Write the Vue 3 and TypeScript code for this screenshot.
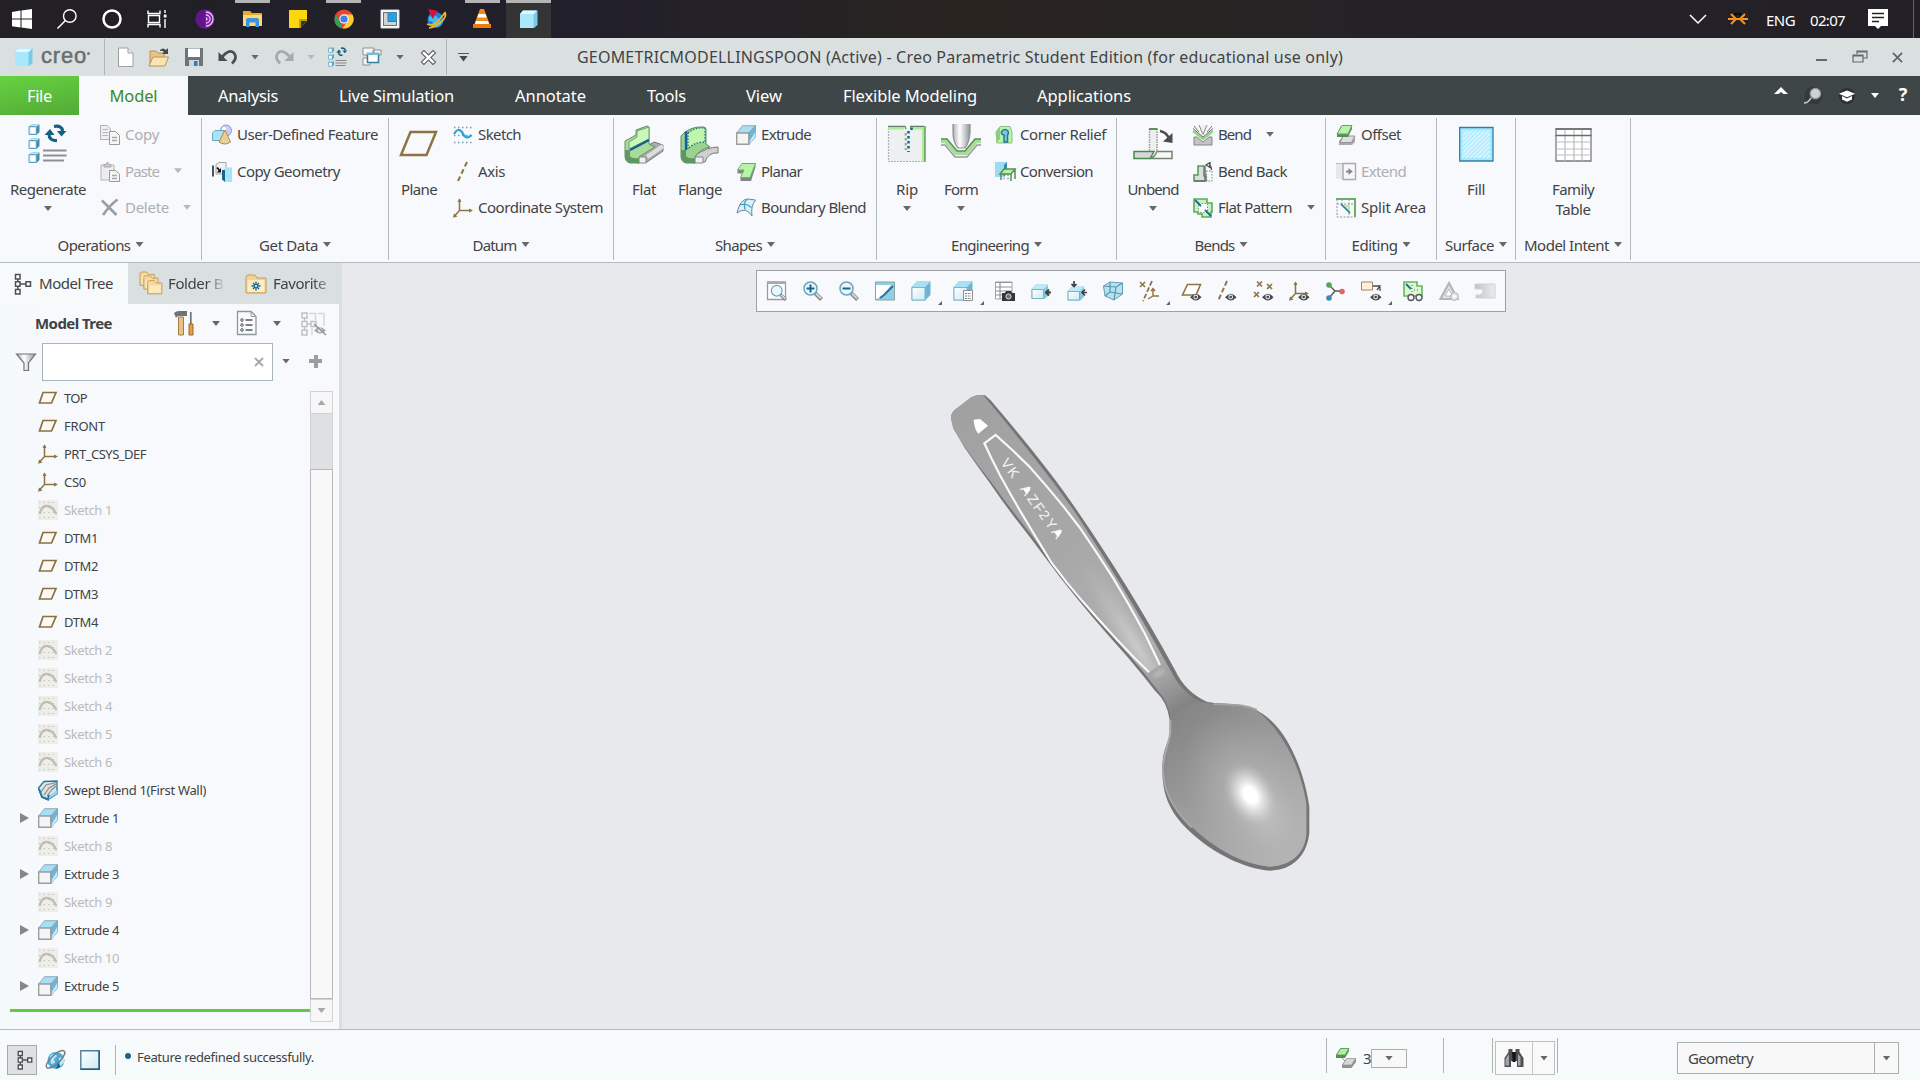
<script setup lang="ts">
interface SmallItem { icon: string; label: string; w: number; off?: boolean; caret?: number }
interface LargeItem { icon: string; lines: string[]; ws: number[]; w: number; ml: number; caret?: boolean }
interface Group { label: string; lw: number; w: number; large: LargeItem[]; gap: number; small: SmallItem[] }

// Stretches or tightens a label so it occupies the given width
const vFit = (el: HTMLElement, binding: { value?: number }) => {
  if (!binding.value) return
  el.style.letterSpacing = '0px'
  const n = (el.textContent || '').length
  const natural = el.getBoundingClientRect().width
  el.style.letterSpacing = ((binding.value - natural) / n).toFixed(3) + 'px'
}

const csys = '<path d="M6.500 1V12.500H18M6.500 12.500L1.500 18" fill="none" stroke="#8f7443" stroke-width="1.500"/><path d="M4.500 4L6.500 .5 8.500 4ZM16 10.500L20 12.500 16 14.500ZM0 19.800L1 15.500 4.500 18.500Z" fill="#8f7443"/>'
const eye = '<path d="M9 16.300Q15 9 20.500 16.300 15 22.500 9 16.300Z" fill="#45484a"/><circle cx="14.700" cy="16" r="2.400" fill="#e5e7e8"/><circle cx="14.700" cy="16" r="1.300" fill="#45484a"/>'
const cube = '<path d="M.5 6L6 .5H19.500V14L14 19.500H.5Z" fill="#6ab6d6"/><path d="M.5 6L6 .5H19.500L14 6Z" fill="#a8e1f6"/><path d="M1 6.500H14V19H1Z" fill="url(#wg)" stroke="#84b4c8"/>'
const extrude = '<path d="M.7 8L6.500 .7H19.500L13 8Z" fill="#a9dff4" stroke="#7f9ba6" stroke-width=".8"/><path d="M13 8L19.500 .7V12L13 19.500Z" fill="#71b5d2" stroke="#7f9ba6" stroke-width=".8"/><path d="M13.500 19L19.300 12V7L13.500 16Z" fill="#bfeafa"/><path d="M.7 8H12.800V19.300H.7Z" fill="#f4f4f5" stroke="#9b9d9e" stroke-width="1.400"/>'
const miniCube = (y: number) => `<g transform="translate(.5 ${y})"><path d="M.5 2.500L3 .5H11V8L8.500 10.500H.5Z" fill="#3f8fb5"/><path d="M.5 2.500L3 .5H11L8.500 2.500Z" fill="#b7e9fb"/><path d="M.5 2.500H8V10.500H.5Z" fill="#c4ebfa" stroke="#5fa3c0"/><path d="M2 4H6.500V9H2Z" fill="#fff"/></g>`
const spin = '<path d="M26 2.500Q34 1 34.500 7" fill="none" stroke="#14607f" stroke-width="3.200"/><path d="M29 7H38.500L33.500 12.500Z" fill="#14607f"/><path d="M29 16.500Q21 17 21 10" fill="none" stroke="#14607f" stroke-width="3.200"/><path d="M16.500 11L22 5 26.500 11Z" fill="#14607f"/>'
const mag = '<path d="M12 12L18.500 18.500" stroke="#858789" stroke-width="4"/><path d="M13 12.500L18 17.500" stroke="#d5d6d6" stroke-width="2"/><circle cx="7.500" cy="7.500" r="6.500" fill="#e9f8fd" stroke="#6da4bd" stroke-width="1.500"/>'
const folderShape = (x: number, y: number) => `<path d="M${x} ${y + 2}Q${x} ${y} ${x + 2} ${y}H${x + 7}L${x + 9} ${y + 2.5}H${x + 15}V${y + 14}H${x}Z" fill="#f5d99e" stroke="#c49b5e"/><path d="M${x + 2} ${y + 5}H${x + 14}V${y + 13}H${x + 2}Z" fill="#fde9bd"/>`

const icons: Record<string, string> = {
  win: '<path d="M0 3L8.500 1.600V9.500H0ZM9.500 1.400L20 0V9.500H9.500ZM0 10.500H8.500V18.500L0 17.200ZM9.500 10.500H20V20L9.500 18.600Z" fill="#fff"/>',
  search: '<circle cx="12.800" cy="7" r="6.300" fill="none" stroke="#fff" stroke-width="1.400"/><path d="M8.400 11.500L.5 19.500" stroke="#fff" stroke-width="1.500"/>',
  cortana: '<circle cx="10" cy="10" r="8.500" fill="none" stroke="#fff" stroke-width="2.500"/>',
  taskview: '<path d="M1 1.500V4.500H13V1.500M1 18.500V15.500H13V18.500M1.500 6.500H12.500V13.500H1.500ZM18 1V4M18 10V19" fill="none" stroke="#fff" stroke-width="1.400"/><path d="M16.800 5.500H19.500V8.500H16.800Z" fill="#fff"/>',
  tor: '<circle cx="9" cy="10" r="9.500" fill="#7d1fa5"/><path d="M9 .5A9.500 9.500 0 0 0 9 19.500Z" fill="#62158b"/><path d="M10 3A7 7 0 0 1 10 17M10 6A4 4 0 0 1 10 14M10 9A1 1 0 0 1 10 11" fill="none" stroke="#e8c4f3" stroke-width="1.300"/>',
  explorer: '<path d="M0 2H7L9 4H19V17H0Z" fill="#e8a92e"/><path d="M0 6H19V17H0Z" fill="#fdd876"/><path d="M3 17V11Q3 9 5 9H14Q16 9 16 11V18H12.500V13.500H6.500V18H3Z" fill="#3897de"/>',
  note: '<path d="M0 1H18V12L11 19H0Z" fill="#fed70b"/><path d="M11 19V12H18Z" fill="#34342f"/><path d="M10 10H18V12H12V19H10Z" fill="#c8a106"/>',
  chrome: '<circle cx="10" cy="10" r="9.500" fill="#e7453a"/><path d="M1.700 5.300L7 14.500 8.500 19.400A9.500 9.500 0 0 1 1.700 5.300Z" fill="#34a152"/><path d="M10 5.500H18.400A9.500 9.500 0 0 1 8.500 19.400L13.500 12Z" fill="#fccd34"/><circle cx="10" cy="10" r="4.700" fill="#f7f7f7"/><circle cx="10" cy="10" r="3.600" fill="#3d7ff0"/>',
  winapp: '<path d="M1 1H19V19H1Z" fill="#fff" stroke="#d9dde0"/><path d="M3 3H17V17H3Z" fill="#65717b"/><path d="M8.500 3.500H16.500V12H8.500Z" fill="#22a3e6"/><path d="M4 4H7.500V13H16V16H4Z" fill="#cfd3d6"/>',
  globe: '<circle cx="9.500" cy="11" r="8" fill="#1b80d8"/><path d="M3 8Q8 3 12 9T16 14Q12 20 6 17 9 12 3 12Z" fill="#37c0e9"/><path d="M1 15Q7 18 13 11T19 3Q21 8 15 13T3 19" fill="none" stroke="#efb62b" stroke-width="1.700"/><path d="M2 0L12 2 6.500 10Z" fill="#d4143c"/>',
  vlc: '<path d="M7 0H11L17 16H1Z" fill="#f08a17"/><path d="M5.500 5H12.500L13.700 8.500H4.300ZM3 12H15L16 15H2Z" fill="#fff"/><path d="M0 15H18V19H0Z" fill="#e87c10"/>',
  creo: '<path d="M1 5L4 1.500H18.500V16L15 19H1Z" fill="#79c9ea"/><path d="M1 5L4 1.500H18L15 5Z" fill="#e0f8ff"/><path d="M1 5H14.500V19H1Z" fill="#a9e7fc"/>',
  tchev: '<path d="M2 6L10 14 18 6" fill="none" stroke="#fff" stroke-width="1.500"/>',
  fly: '<path d="M0 10H6M14 10H20M3 5L8 10 3 15M17 5L12 10 17 15M8 10H12" fill="none" stroke="#f5941f" stroke-width="2"/><circle cx="8" cy="5" r="1.600" fill="#090909"/><circle cx="12" cy="5" r="1.600" fill="#090909"/>',
  notif: '<path d="M0 0H20V17H13L10 20 7 17H0Z" fill="#fff"/><path d="M4 4.500H16M4 8.500H16M4 12.500H11" stroke="#242228" stroke-width="1.300"/>',
  newf: '<path d="M2.500 1H12L17 6V19.500H2.500Z" fill="#fefefe" stroke="#9da1a3"/><path d="M12 1V6H17" fill="#e9eaea" stroke="#9da1a3"/>',
  open: '<path d="M1 4H7L9 6H15V17H1Z" fill="#e9c385" stroke="#b8935a"/><path d="M0 19L4 10H19.500L16 19Z" fill="#fbe4b3" stroke="#b8935a"/><path d="M11 3Q14 0 17 3L19 1V7H13L15 5Q13 3 11 4Z" fill="#45494b"/>',
  save: '<path d="M1 1H19V19H1Z" fill="#6f7375"/><path d="M4 1.500H16V10H4Z" fill="#fff"/><path d="M5 13H15V19H5Z" fill="#cfd4d7"/><path d="M10 14H13.500V19H10Z" fill="#3a7bb5"/>',
  undo: '<path d="M4 10Q11 1.500 16 6 20 11 14 16.500" fill="none" stroke="#494e51" stroke-width="2.800"/><path d="M.5 5V14H9.500Z" fill="#494e51"/>',
  redo: '<path d="M16 10Q9 1.500 4 6 0 11 6 16.500" fill="none" stroke="#a5aaab" stroke-width="2.800"/><path d="M19.500 5V14H10.500Z" fill="#a5aaab"/>',
  regenS: '<g transform="scale(.5)">' + miniCube(0) + miniCube(14) + miniCube(28) + spin + '<path d="M15 27H37M15 32H37M15 37H35" stroke="#85898b" stroke-width="2.400"/></g>',
  wins: '<path d="M1 1H12V8H1ZM1 11H8V18H1ZM11 3H19V8H11Z" fill="#f4f6f6" stroke="#8c9193"/><path d="M5.500 6.500H16.500V15.500H5.500Z" fill="#fff" stroke="#327f9f" stroke-width="1.500"/><path d="M5 6H17V8H5Z" fill="#72bdd7"/>',
  closex: '<path d="M4.500 4.500L15.500 15.500M15.500 4.500L4.500 15.500" stroke="#55595b" stroke-width="5.500" stroke-linecap="square"/><path d="M4.500 4.500L15.500 15.500M15.500 4.500L4.500 15.500" stroke="#fff" stroke-width="3" stroke-linecap="square"/>',
  restore: '<path d="M5 4V1H15V8H11M1 5H11V12H1Z" fill="none" stroke="#65696a" stroke-width="1.200"/><path d="M1 5H11V6.500H1ZM5 1H15V2.500H5Z" fill="#65696a"/>',
  regen: miniCube(0) + miniCube(14) + miniCube(28) + spin + '<path d="M15 26.500H38.500M15 31.500H38.500M15 36.500H36" stroke="#8d9092" stroke-width="2.200"/>',
  copy: '<path d="M.5 .5H7L10.500 4V14.500H.5Z" fill="#efefef" stroke="#b0b1b1"/><path d="M2.500 4.500H8M2.500 7.500H8M2.500 10.500H8" stroke="#b5b5b5"/><path d="M9.500 6.500H15.500L19.500 10.500V19.500H9.500Z" fill="#f6f6f6" stroke="#999b9b"/><path d="M12 12.500H17M12 15.500H17" stroke="#a9a9a9" stroke-width="1.300"/>',
  paste: '<path d="M1 3H14V18H1Z" fill="#ededed" stroke="#b5b5b5"/><path d="M4 2.500H6L7.500 0 9 2.500H11V5H4Z" fill="#cacaca" stroke="#aaa"/><path d="M9.500 8.500H15.500L19.500 12V19.500H9.500Z" fill="#f6f6f6" stroke="#999b9b"/><path d="M12 13.500H17M12 16.500H17" stroke="#a9a9a9" stroke-width="1.300"/>',
  del: '<path d="M2 2.500L16.500 17M17.500 1.500Q10 7 3 17" fill="none" stroke="#9b9d9e" stroke-width="2.600"/>',
  udf: '<circle cx="14" cy="5.500" r="5.500" fill="#c7cdf5" stroke="#8f98c9"/><circle cx="12" cy="4" r="2" fill="#fff"/><path d="M.5 8L3 5.500H12V14L10 15.500H.5Z" fill="#a9e3f8" stroke="#69a9c3"/><path d="M13 5L18.500 17Q13 21 7 17Z" fill="#e9cf94" stroke="#a88c53"/>',
  copyg: '<path d="M1 3.500V14.500" stroke="#46555b" stroke-width="2"/><path d="M4 2.500L7 .5H14V9L12 12H4Z" fill="#f1f1f1" stroke="#a2a5a6"/><path d="M9 6V10.500H4.800Z" fill="#111"/><path d="M5 5.500L8 9" stroke="#111" stroke-width="1.800"/><path d="M11 8L14 5.500H20V20H13V11H11Z" fill="#a5e5fb"/><path d="M10 8H13V20L10 17.500Z" fill="#19658a"/>',
  plane: '<path d="M11.500 8H37L27.500 31H2Z" fill="none" stroke="#8f7443" stroke-width="2.500"/>',
  sketch: '<path d="M1 2.500H19M1 10.500H19M1 17.500H19" stroke="#7d9aab" stroke-width="1.500" stroke-dasharray="1.500 2.500"/><path d="M1 9Q5 2 9 7 13 16 18.500 10" fill="none" stroke="#2aa3d9" stroke-width="2.300"/>',
  axis: '<path d="M14 0L4.500 20" stroke="#8f7443" stroke-width="2" stroke-dasharray="5 3"/>',
  csys,
  flat: '<path d="M13 28L30 18 39 21V27L23 38H12Z" fill="#a9acad" stroke="#777"/><path d="M13 33H22V39H13Z" fill="#f0f0f0" stroke="#888"/><path d="M23 33L39 22" stroke="#dedede" stroke-width="4"/><path d="M1 17L12 11V6L23 2 25 3V20L31 23 15 33V39H6Q1 38 1 32Z" fill="#a6db99" stroke="#668e62"/><path d="M5 18L13 13V7L25 3V15L5 25Z" fill="#c9f9b9" stroke="#779c70"/><path d="M1 26H6V32Q8 35 15 34V39H6Q1 37 1 32Z" fill="#5f9764"/><path d="M6 26L25 16" stroke="#175f91" stroke-width="2.300"/>',
  flange: '<path d="M14 32Q27 23 38 23V29Q28 28 25 38H12Z" fill="#cfd1d1" stroke="#777"/><path d="M13 33H23V39H13Z" fill="#f0f0f0" stroke="#888"/><path d="M1 12Q9 2 24 3L26 5V20L30 23Q20 25 15 33V39H6Q1 38 1 32Z" fill="#9bd28f" stroke="#5d8b62"/><path d="M8 9Q15 3 25 4V18Q14 18 8 25Z" fill="#bef6ac" stroke="#246d85" stroke-dasharray="1.500 1.500" stroke-width="1.300"/><path d="M6 7.500V26" stroke="#1260a0" stroke-width="2.400"/><path d="M1 26H6V32Q8 35 15 34V39H6Q1 37 1 32Z" fill="#5f9764"/>',
  extrude,
  planar: '<path d="M4.500 15.500H14L19.500 1.500V5L15 19H4.500ZM1.500 8H8L6.500 11.500H1.500Z" fill="#808485"/><path d="M6 1.500H19.500L14 15.500H4.500L8 8H1.500Z" fill="#b5f5a4" stroke="#6bac69"/>',
  bblend: '<path d="M1 15Q4 1 12 1L19.500 2Q14.500 8 16 18 10 8 1 15Z" fill="#d5f2fc" stroke="#75848b"/><path d="M11 1Q7 5 9 11.500M4 7Q10 4.500 15.500 9.500" fill="none" stroke="#4a9ec2" stroke-width="1.300"/>',
  rip: '<path d="M1.500 4V37.500H37V4" fill="#eeeff0" stroke="#b1b2b3" stroke-width="1.200" stroke-dasharray="2 1"/><path d="M1 4H17M23 4H37M36.500 3V38" fill="none" stroke="#a9ee92" stroke-width="3"/><path d="M1 2.300H18L19 5M23 2.300H37M38 2V38" fill="none" stroke="#618267" stroke-width="1.300"/><path d="M21.500 7V28M24.500 3.500V6" stroke="#0e679a" stroke-width="2.500" stroke-dasharray="2.500 2.500"/><path d="M18.700 9V26" stroke="#79b178" stroke-width="2" stroke-dasharray="2.500 2.500"/>',
  form: '<path d="M12 0H29V9Q28 20 24 24H17Q12 18 12 9Z" fill="url(#mg)"/><path d="M12 0V9Q12 18 17 24H24Q28 19 29 9V0" fill="none" stroke="#8b8d91" stroke-width="1.200"/><path d="M0 17H5L15 29H25L35 17H40" fill="none" stroke="#a9dc99" stroke-width="4.500"/><path d="M0 15H6L16 27H24L34 15H40" fill="none" stroke="#5b8d5d" stroke-width="1.500"/><path d="M0 21H4L14 33H26L36 21H40" fill="none" stroke="#999" stroke-width="1.400"/>',
  corner: '<path d="M1 7L5 1.500H15L17 7V18H2Z" fill="#b9f5a8" stroke="#91bd88"/><path d="M1 7L5 1.500V14L1 18Z" fill="#8dcc82"/><path d="M9 17V10Q5 9 7 6 10 3 13 6 14 9 12.500 10V17Z" fill="#7fc7dc" stroke="#28789c" stroke-width="1.500"/>',
  conv: '<path d="M0 0H12V4L9 15H0Z" fill="#9bdcf5"/><path d="M9 3L12 0V11L9 15Z" fill="#3788aa"/><path d="M5 12L9 7H20L16 12ZM6 12V18M16 12V19M20 7V17" fill="#b7f1a7" stroke="#548d57" stroke-width="1.500"/><path d="M9 12V19M13 12V19" stroke="#5e8e61" stroke-dasharray="2 1.500"/>',
  unbend: '<path d="M16.500 6H24V28H16.500Z" fill="#efeff0"/><path d="M16.500 5V28M24 5V27" stroke="#909394" stroke-width="1.400" stroke-dasharray="1.500 1"/><path d="M16 5H24.500" stroke="#569658" stroke-width="2"/><path d="M1 27.500H21L17 34.500H1Z" fill="#d6d8d8" stroke="#488a4e" stroke-width="1.500"/><path d="M24 27.500H39V34.500H17Q22 33 24 27.500Z" fill="#f7f7f7" stroke="#6f8672" stroke-width="1.500"/><path d="M27 7Q33 8 36 14" fill="none" stroke="#4a4d4f" stroke-width="2.600"/><path d="M39.500 9V19L30 17.500Z" fill="#4a4d4f"/>',
  bend: '<path d="M6 0L10 9.500 14 0" fill="#f1f1f1" stroke="#898c8d"/><path d="M0 6L10 14 20 6" fill="none" stroke="#92d683" stroke-width="2.500"/><path d="M0 3.500L10 12 20 3.500M1 1L6 7M19 1L14 7" fill="none" stroke="#6b6e70"/><path d="M1 12H4L10 17 16 12H19V20H1Z" fill="#c3c5c5" stroke="#858888"/>',
  bendback: '<path d="M5 4H11V14H13V19H1V13H5Z" fill="#dcdede" stroke="#569658" stroke-width="1.500"/><path d="M1.500 19H12V4" fill="none" stroke="#6d7071" stroke-width="1.500"/><path d="M13 9H19V19H14Z" fill="none" stroke="#6d8670" stroke-dasharray="1.500 1.500"/><path d="M13 3L17 .5V5.500ZM16 3Q18.500 4 18.500 8" fill="none" stroke="#444" stroke-width="1.200"/>',
  flatp: '<path d="M5 1H14V5H19V14H18V19H9V16H5V14H1V5H1V1Z" fill="#c9f2be" stroke="#5cac5b" stroke-width="1.600"/><path d="M5.500 5.500H14.500V14.500H5.500Z" fill="#fff" stroke="#76977a" stroke-dasharray="1.500 1.500"/><path d="M2 2L8 8M12 12L18 18" stroke="#1d6b99" stroke-width="1.800"/>',
  offset: '<path d="M6 12H19V17L16 20H3V16Z" fill="#a7aaab"/><path d="M7 11H19L15.500 17.500H4Z" fill="#dedfdf" stroke="#929596"/><path d="M1 9L5 1H16V4L12 12H1Z" fill="#5b8a5e"/><path d="M6 .5H16L12 9H1Z" fill="#b7f3a8" stroke="#669f67"/>',
  extend: '<path d="M0 2H19V17H0Z" fill="#e7e8e8"/><path d="M0 1.500H7" stroke="#bbb"/><path d="M7 1.500H19.500V17.500H7Z" fill="#f7f7f7" stroke="#a9abab" stroke-width="1.400"/><path d="M10 9.500H14" stroke="#858788" stroke-width="2"/><path d="M12.500 6L16.800 9.500 12.500 13Z" fill="#858788"/>',
  split: '<path d="M0 1H19V19" fill="none" stroke="#69af65" stroke-width="2"/><path d="M1 1V19H19M1 6H19M13 1V19M6 1V6" fill="none" stroke="#929698" stroke-dasharray="2 1.500"/><path d="M5 7L14 15V7Z" fill="#b9ecac"/><path d="M5 6L14 15" stroke="#29709a" stroke-width="1.500"/>',
  fill: '<path d="M3.700 3.500H37V37H3.700Z" fill="#a6e8fe" stroke="#2b82a9" stroke-width="1.300"/><path d="M6.500 6.500H34V34H6.500Z" fill="url(#hatch)"/>',
  family: '<path d="M3 5H38V37H3Z" fill="#fff" stroke="#777b7d" stroke-width="1.300"/><path d="M3 18H38M3 25H38M3 31H38M12 5V37M21 5V37M29 5V37" stroke="#b9bcbd" stroke-width="1.200"/><path d="M2.500 5H38.500M2.500 11.500H38.500" stroke="#696c6d" stroke-width="1.500"/>',
  refit: '<path d="M.5 1H18.500V18.500H.5Z" fill="#fff" stroke="#999c9e" stroke-width="1.300"/><path d="M0 1H19V3H0Z" fill="#a6a8aa"/><g transform="translate(3.500 3.500) scale(.83)">' + mag + '</g>',
  zin: mag + '<path d="M3.500 7.500H11.500M7.500 3.500V11.500" stroke="#17658c" stroke-width="2"/>',
  zout: mag + '<path d="M3.500 7.500H11.500" stroke="#17658c" stroke-width="2"/>',
  repaint: '<path d="M.5 1H19.500V19H.5Z" fill="#8fd0e7" stroke="#8d9fa7"/><path d="M1 4H16Q12 10 8 14 4 17 1 18Z" fill="#fff"/><path d="M18 5L9 14 5 17" fill="none" stroke="#2a7398" stroke-width="2"/>',
  shade: cube,
  saved: cube + '<path d="M10.500 9.500H19.500V19.500H10.500Z" fill="#fff" stroke="#8e9193"/><path d="M12 12.500H18M12 15H18M12 17.500H18" stroke="#7b7e80" stroke-dasharray="2 .7"/>',
  camera: '<path d="M.5 1H17V18H.5Z" fill="#fff" stroke="#a0a3a5"/><path d="M0 1.500H17M1 6H17M1 10H17M1 14H17M5 1V18" stroke="#929596" stroke-width="1.200"/><path d="M7 12H10L11 10H16L17 12H20V20H7Z" fill="#333638"/><circle cx="13.500" cy="15.500" r="2.600" fill="#6b7073" stroke="#ddd"/>',
  view1: '<path d="M.5 8L5 3.500H17V15L13.500 18H.5Z" fill="#87c8e0"/><path d="M.5 8L5 3.500H17L13 8Z" fill="#bdeaf9"/><path d="M1 8.500H12.500V17.500H1Z" fill="url(#wg)" stroke="#7fb0c4"/><path d="M15 11.500H20M18 8.500L15 11.500 18 14.500" fill="none" stroke="#3c4144" stroke-width="2"/>',
  view2: '<path d="M.5 10L5 5.500H17V16L13.500 19.500H.5Z" fill="#87c8e0"/><path d="M.5 10L5 5.500H17L13 10Z" fill="#bdeaf9"/><path d="M1 10.500H12.500V19H1Z" fill="url(#wg)" stroke="#7fb0c4"/><path d="M15 11.500H20M18 8.500L15 11.500 18 14.500M7 0V5M4.500 3L7 5.500 9.500 3" fill="none" stroke="#3c4144" stroke-width="1.700"/>',
  persp: '<path d="M0.500 5L7 1 19.500 2V13L11 19 2 15Z" fill="#b6e2f0" stroke="#639db4"/><path d="M.5 5L13 6 19.500 2M13 6L11 19M7 1V11L2 15M7 11L19.500 13" fill="none" stroke="#5795ae" stroke-width="1.200"/>',
  datums: '<path d="M1 1L6 6M6 1L1 6" stroke="#8f7443" stroke-width="1.600"/><path d="M13 0L4 20" stroke="#8f7443" stroke-width="1.800" stroke-dasharray="5 2"/><path d="M14 8V15H20M14 15L9 18M12 10L14 7.500 16 10" fill="none" stroke="#8f7443" stroke-width="1.400"/>',
  pdisp: '<path d="M6.500 3.500H19.500L15 14H1.500Z" fill="#fff" stroke="#8f7443" stroke-width="1.600"/>' + eye,
  adisp: '<path d="M10 0L1 20" stroke="#8f7443" stroke-width="1.900" stroke-dasharray="5 2.500"/><g transform="translate(-1 0)">' + eye + '</g>',
  ptdisp: '<path d="M4 .5L9 5.500M9 .5L4 5.500M14 3L19 8M19 3L14 8M1 11L6 16M6 11L1 16" stroke="#8f7443" stroke-width="1.700"/>' + eye,
  cdisp: csys + eye,
  spin: '<path d="M4 4L10 10H17M10 10L4 17" fill="none" stroke="#575b5d" stroke-width="1.400"/><circle cx="4" cy="4" r="2.800" fill="#55a25b"/><circle cx="17" cy="10.500" r="2.800" fill="#e06464"/><circle cx="4" cy="17" r="2.800" fill="#3b88bd"/>',
  annot: '<path d="M.5 1H11.500V9H.5Z" fill="#fff1dd" stroke="#a2855a"/><path d="M12 5H19L16 9M19 6V10" fill="none" stroke="#4b4e50" stroke-width="1.300"/>' + eye,
  glasses: '<path d="M1 1H14V5H19V15H1Z" fill="#dcf8d2" stroke="#65b761" stroke-width="1.600"/><path d="M3 3L8 8" stroke="#1a709b" stroke-width="2"/><path d="M9 4V12M11 9H17" stroke="#457248" stroke-dasharray="1 2"/><circle cx="8" cy="16.500" r="3" fill="#f4f4f4" stroke="#55585a" stroke-width="1.400"/><circle cx="16" cy="16.500" r="3" fill="#f4f4f4" stroke="#55585a" stroke-width="1.400"/>',
  tri: '<path d="M10 2L18.500 18H1.500Z" fill="#e3e3e3" stroke="#b3b5b6" stroke-width="2.200"/><path d="M10 8L13.500 15H6Z" fill="#fff" stroke="#b9bbbc"/><circle cx="15.500" cy="15.500" r="4" fill="#dddede" stroke="#b7b9ba"/><path d="M14 13V18L18 15.500Z" fill="#fff"/>',
  bendgrey: '<path d="M0 3H20V17H1V14Q9 15 8 8H0Z" fill="url(#gg)" stroke="#cfd1d2"/>',
  mtree: '<path d="M2.500 .5H7V5H2.500ZM2.500 7.800H7V12.300H2.500ZM2.500 15.500H7V20H2.500ZM13 7.800H17.500V12.300H13ZM4.800 5V7.800M4.800 12.300V15.500M7 10H13" fill="#fff" stroke="#4c5052" stroke-width="1.500"/>',
  folders: '<g transform="scale(.95)">' + folderShape(0, 0) + folderShape(4, 4) + folderShape(8, 9) + '</g>',
  fav: '<path d="M0 4Q0 1 2 1H9L11 4H20V19H0Z" fill="#f2d396" stroke="#c49b5e"/><path d="M1.500 6H18.500V18H1.500Z" fill="#fdedc7"/><path d="M10 7.500V16.500M5.500 12H14.500M7 9L13 15M13 9L7 15" stroke="#156a96" stroke-width="1.400"/><circle cx="10" cy="12" r="1" fill="#fff"/>',
  tools: '<path d="M4.500 6H9.500V24H4.500Z" fill="#e7c287" stroke="#a57d43"/><path d="M0 2Q2 0 5 0H13V5H5Q3 5 2 7Z" fill="#6e7377"/><path d="M16.800 1V13" stroke="#6e7377" stroke-width="1.700"/><path d="M15 13H19V24H15Z" fill="#e2a24d" stroke="#9b672a"/>',
  settings: '<path d="M.5 .5H14L19 5.500V23.500H.5Z" fill="#fafbfb" stroke="#8a989d" stroke-width="1.300"/><path d="M14 .5V5.500H19" fill="none" stroke="#9a9c9d"/><path d="M8.500 9H15.500M8.500 14H15.500M8.500 19H15.500" stroke="#54595b" stroke-width="1.300"/><circle cx="5" cy="9" r="1.300" fill="none" stroke="#54595b"/><circle cx="5" cy="14" r="1.300" fill="none" stroke="#54595b"/><circle cx="5" cy="19" r="1.300" fill="none" stroke="#54595b"/>',
  hidetree: '<g fill="none" stroke="#bfc1c2" stroke-width="1.500"><path d="M1 1H6V6H1ZM1 9.500H6V14.500H1ZM1 18H6V23H1ZM10 9.500H15V14.500H10ZM6 12H10M3.500 6V9.500M3.500 14.500V18"/><path d="M8 1.500H14.500V8M17 1.500H23V14M11 16V23" stroke="#d5d7d8"/></g><path d="M13 18.500Q18.500 12 25 18.500 19 24.500 13 18.500Z" fill="#a7aaab"/><circle cx="19" cy="18.200" r="2" fill="#eee"/><path d="M13 12L25 23" stroke="#8f9293" stroke-width="1.500"/>',
  filter: '<path d="M.5 2H19.500L12.500 11V18.500H8V11Z" fill="url(#mg)" stroke="#717476" stroke-width="1.200"/>',
  tplane: '<path d="M5 4.500H18L13.500 15H1.500Z" fill="#fbf9f4" stroke="#8a7044" stroke-width="1.700"/>',
  tsketch: '<path d="M0 0H20V20H0Z" fill="#ededec"/><path d="M1 2.500H19M1 7.500H19M1 12.500H19M1 17.500H19" stroke="#c9c9bd" stroke-dasharray="1.500 3"/><path d="M1.500 14Q4 5 9.500 6 14 6 18.500 14" fill="none" stroke="#c1bfac" stroke-width="2.400"/>',
  swept: '<path d="M.5 8L6 1.500 19 1V14L10 19.500 4 17Z" fill="#dfe1e2" stroke="#2579a2" stroke-width="1.300"/><path d="M3 12L8 5 18 2.500M6 15L11 8 18 4M9 16L14 9.500 18 6" fill="none" stroke="#8a8e90" stroke-width="1.200"/><path d="M1 9L4 17 10 19.500 11 15" fill="none" stroke="#2579a2" stroke-width="2"/><path d="M10.500 19L12 15.500 19 10V14Z" fill="#8fd3ee"/>',
  web: '<circle cx="10" cy="10.500" r="8.500" fill="#4aa8dc"/><path d="M4 6Q9 2 11 6L8 9 9 13 5 14ZM13 8L18 7 18 13 13 17Z" fill="#b9e6f8"/><path d="M13 11L10 19 14 17Z" fill="#165c92"/><path d="M1 18Q-2 15 6 7T18 1Q21 3 14 11T1 18" fill="none" stroke="#777c80" stroke-width="1.500"/>',
  page: '<path d="M.8 .8H19.200V19.200H.8Z" fill="url(#wg)" stroke="#4f8098" stroke-width="1.400"/><path d="M.8 19.200H19.200V.8" fill="none" stroke="#1c5f82" stroke-width="1.500"/>',
  stack: '<path d="M0 7L4.500 0H13V3L9 10H0Z" fill="#598b5c"/><path d="M4.500 .5H13L9 7H.5Z" fill="#b2ef9d" stroke="#5b9561" stroke-width=".8"/><path d="M6 17L10.500 10.500H20V14L15.500 20H6Z" fill="#8e9192"/><path d="M10.500 10.500H19.500L15.500 17H6.500Z" fill="#d5d7d7" stroke="#999b9c" stroke-width=".8"/><path d="M6 10L9 13" stroke="#999"/>',
  bino: '<path d="M4.500 1H8.500V4H11.500V1H15.500V4L19.500 10V19H13V13H7V19H.5V10L4.500 4Z" fill="#4c5052"/><path d="M8 4H12L11.500 14H8.500Z" fill="#161718"/><path d="M1.500 11L5 6V17.500H1.500ZM14 6V17.500H16.500V9Z" fill="#a3a6a8"/>',
  findw: '<circle cx="10" cy="10" r="9.500" fill="#343a3a"/><circle cx="12" cy="8" r="5.500" fill="#ccd2d3" stroke="#8f9797" stroke-width="1.300"/><path d="M7.500 12.500Q4 18 0 18" fill="none" stroke="#c7cccc" stroke-width="1.600"/>',
  grad: '<circle cx="10" cy="10" r="9" fill="#2c3233"/><path d="M1 7.500L10 4 19 7.500 10 11.500ZM4.500 10L10 12.800 15.500 10V14L10 16.500 4.500 14Z" fill="#fff"/>',
  toparrow: '<path d="M3 11L10 4 17 11H12.500L10 9 7.500 11Z" fill="#fff"/>',
}

const tasks = [
  { i: 'win', x: 12, w: 21 }, { i: 'search', x: 25, w: 20 }, { i: 'cortana', x: 25, w: 20 }, { i: 'taskview', x: 25, w: 20 },
  { i: 'tor', x: 29, w: 20 }, { i: 'explorer', x: 27, w: 20 }, { i: 'note', x: 26, w: 20 }, { i: 'chrome', x: 25, w: 20 },
  { i: 'winapp', x: 26, w: 20 }, { i: 'globe', x: 26, w: 20 }, { i: 'vlc', x: 27, w: 20 },
]

const tabs = [
  { t: 'Analysis', w: 60, ml: 30 }, { t: 'Live Simulation', w: 115, ml: 61 }, { t: 'Annotate', w: 71, ml: 61 }, { t: 'Tools', w: 39, ml: 61 },
  { t: 'View', w: 36, ml: 60 }, { t: 'Flexible Modeling', w: 134, ml: 61 }, { t: 'Applications', w: 94, ml: 60 },
]

const groups: Group[] = [
  { label: 'Operations', lw: 73, w: 202, gap: 4, large: [{ icon: 'regen', lines: ['Regenerate'], ws: [76], w: 96, ml: 0, caret: true }],
    small: [{ icon: 'copy', label: 'Copy', w: 34, off: true }, { icon: 'paste', label: 'Paste', w: 34, off: true, caret: 10 }, { icon: 'del', label: 'Delete', w: 44, off: true, caret: 9 }] },
  { label: 'Get Data', lw: 59, w: 187, gap: 10, large: [],
    small: [{ icon: 'udf', label: 'User-Defined Feature', w: 141 }, { icon: 'copyg', label: 'Copy Geometry', w: 103 }] },
  { label: 'Datum', lw: 44, w: 225, gap: 6, large: [{ icon: 'plane', lines: ['Plane'], ws: [36], w: 56, ml: 2 }],
    small: [{ icon: 'sketch', label: 'Sketch', w: 43 }, { icon: 'axis', label: 'Axis', w: 27 }, { icon: 'csys', label: 'Coordinate System', w: 125 }] },
  { label: 'Shapes', lw: 47, w: 263, gap: 8, large: [{ icon: 'flat', lines: ['Flat'], ws: [24], w: 56, ml: 2 }, { icon: 'flange', lines: ['Flange'], ws: [44], w: 56, ml: 0 }],
    small: [{ icon: 'extrude', label: 'Extrude', w: 50 }, { icon: 'planar', label: 'Planar', w: 41 }, { icon: 'bblend', label: 'Boundary Blend', w: 105 }] },
  { label: 'Engineering', lw: 78, w: 240, gap: 7, large: [{ icon: 'rip', lines: ['Rip'], ws: [22], w: 54, ml: 3, caret: true }, { icon: 'form', lines: ['Form'], ws: [34], w: 54, ml: 0, caret: true }],
    small: [{ icon: 'corner', label: 'Corner Relief', w: 86 }, { icon: 'conv', label: 'Conversion', w: 73 }] },
  { label: 'Bends', lw: 40, w: 209, gap: 10, large: [{ icon: 'unbend', lines: ['Unbend'], ws: [51], w: 60, ml: 6, caret: true }],
    small: [{ icon: 'bend', label: 'Bend', w: 33, caret: 10 }, { icon: 'bendback', label: 'Bend Back', w: 69 }, { icon: 'flatp', label: 'Flat Pattern', w: 74, caret: 10 }] },
  { label: 'Editing', lw: 46, w: 111, gap: 10, large: [],
    small: [{ icon: 'offset', label: 'Offset', w: 40 }, { icon: 'extend', label: 'Extend', w: 45, off: true }, { icon: 'split', label: 'Split Area', w: 65 }] },
  { label: 'Surface', lw: 49, w: 79, gap: 0, large: [{ icon: 'fill', lines: ['Fill'], ws: [18], w: 56, ml: 11 }], small: [] },
  { label: 'Model Intent', lw: 85, w: 115, gap: 0, large: [{ icon: 'family', lines: ['Family', 'Table'], ws: [42, 35], w: 60, ml: 27 }], small: [] },
]

const viewTools: { i: string; c?: boolean }[] = [
  { i: 'refit' }, { i: 'zin' }, { i: 'zout' }, { i: 'repaint' }, { i: 'shade', c: true }, { i: 'saved', c: true }, { i: 'camera' },
  { i: 'view1' }, { i: 'view2' }, { i: 'persp' }, { i: 'datums', c: true }, { i: 'pdisp' }, { i: 'adisp' }, { i: 'ptdisp' }, { i: 'cdisp' },
  { i: 'spin' }, { i: 'annot', c: true }, { i: 'glasses' }, { i: 'tri' }, { i: 'bendgrey' },
]

const tree = [
  { i: 'tplane', t: 'TOP', w: 23 }, { i: 'tplane', t: 'FRONT', w: 41 }, { i: 'csys', t: 'PRT_CSYS_DEF', w: 82 }, { i: 'csys', t: 'CS0', w: 22 },
  { i: 'tsketch', t: 'Sketch 1', w: 48 }, { i: 'tplane', t: 'DTM1', w: 34 }, { i: 'tplane', t: 'DTM2', w: 34 }, { i: 'tplane', t: 'DTM3', w: 34 },
  { i: 'tplane', t: 'DTM4', w: 34 }, { i: 'tsketch', t: 'Sketch 2', w: 48 }, { i: 'tsketch', t: 'Sketch 3', w: 48 }, { i: 'tsketch', t: 'Sketch 4', w: 48 },
  { i: 'tsketch', t: 'Sketch 5', w: 48 }, { i: 'tsketch', t: 'Sketch 6', w: 48 }, { i: 'swept', t: 'Swept Blend 1(First Wall)', w: 142 },
  { i: 'extrude', t: 'Extrude 1', w: 55 }, { i: 'tsketch', t: 'Sketch 8', w: 48 }, { i: 'extrude', t: 'Extrude 3', w: 55 },
  { i: 'tsketch', t: 'Sketch 9', w: 48 }, { i: 'extrude', t: 'Extrude 4', w: 55 }, { i: 'tsketch', t: 'Sketch 10', w: 55 }, { i: 'extrude', t: 'Extrude 5', w: 55 },
]

const handleLeft = 'L675 932 640 888 590 828 540 772 490 714 440 654 390 592 345 532 300 472 255 414 215 360 180 310 145 262 105 205 70 145Z'
const handleLeftIn = 'L684 932 645 882 595 822 545 766 495 708 445 648 395 586 350 526 305 466 260 409 220 356 184 307 148 260 107 205 70 145Z'
const bowl = 'M720 1005Q750 980 800 963C900 985 950 968 990 1000C1070 1070 1112 1170 1129 1270V1360C1125 1420 1085 1457 1020 1460C940 1453 860 1410 790 1345C722 1280 702 1220 705 1160C706 1115 722 1085 723 1055Z'
const groove = 'M657 877L610 830 560 778 510 723 455 661 410 607 365 549 335 500 303 447 270 392 240 340 210 286 185 236 163 190 197 165 250 213 300 262 350 319 400 379 450 444 500 518 550 595 600 680 645 762 690 855'
</script>

<template>
  <div class="screen">
    <svg class="defs" width="0" height="0">
      <defs>
        <linearGradient id="wg" x1="0" y1="0" x2="1" y2="1"><stop offset="0" stop-color="#fff" /><stop offset="1" stop-color="#cbe9f4" /></linearGradient>
        <linearGradient id="mg"><stop offset="0" stop-color="#aeb1b5" /><stop offset=".4" stop-color="#fff" /><stop offset="1" stop-color="#90959b" /></linearGradient>
        <linearGradient id="gg"><stop offset="0" stop-color="#c1c3c4" /><stop offset="1" stop-color="#ececec" /></linearGradient>
        <pattern id="hatch" width="3" height="3" patternUnits="userSpaceOnUse" patternTransform="rotate(45)"><path d="M1 0V3" stroke="#fff" stroke-width="1.100" /></pattern>
      </defs>
    </svg>

    <header class="taskbar">
      <span v-for="t in tasks" :key="t.i" class="task" :class="{ open: ['explorer', 'chrome', 'vlc'].includes(t.i) }" :style="{ marginLeft: t.x + 'px' }">
        <svg width="20" height="20" viewBox="0 0 20 20" v-html="icons[t.i]" />
      </span>
      <span class="task active"><svg width="20" height="20" viewBox="0 0 20 20" v-html="icons.creo" /></span>
      <span class="grow"></span>
      <div class="tray">
        <svg class="t1" width="20" height="20" viewBox="0 0 20 20" v-html="icons.tchev" />
        <svg class="t2" width="20" height="20" viewBox="0 0 20 20" v-html="icons.fly" />
        <span class="t3" v-fit="29">ENG</span>
        <span class="t4" v-fit="35">02:07</span>
        <svg class="t5" width="20" height="20" viewBox="0 0 20 20" v-html="icons.notif" />
        <i class="peek"></i>
      </div>
    </header>

    <div class="titlebar">
      <div class="brand">
        <svg width="20" height="20" viewBox="0 0 20 20" v-html="icons.creo" />
        <span class="logo" v-fit="46">creo</span><i class="reg"></i>
      </div>
      <div class="quick">
        <svg class="q1" width="20" height="20" viewBox="0 0 20 20" v-html="icons.newf" />
        <svg class="q2" width="20" height="20" viewBox="0 0 20 20" v-html="icons.open" />
        <svg class="q3" width="20" height="20" viewBox="0 0 20 20" v-html="icons.save" />
        <svg class="q4" width="20" height="20" viewBox="0 0 20 20" v-html="icons.undo" />
        <i class="caret q5"></i>
        <svg class="q6" width="20" height="20" viewBox="0 0 20 20" v-html="icons.redo" />
        <i class="caret pale q7"></i>
        <svg class="q8" width="20" height="20" viewBox="0 0 20 20" v-html="icons.regenS" />
        <svg class="q9" width="20" height="20" viewBox="0 0 20 20" v-html="icons.wins" />
        <i class="caret q10"></i>
        <svg class="q11" width="15" height="15" viewBox="1 1 18 18" v-html="icons.closex" />
      </div>
      <i class="custom"></i>
      <span class="title" v-fit="766">GEOMETRICMODELLINGSPOON (Active) - Creo Parametric Student Edition (for educational use only)</span>
      <span class="grow"></span>
      <div class="winbtns">
        <i class="min"></i>
        <svg class="res" width="16" height="14" viewBox="0 0 16 14" v-html="icons.restore" />
        <svg class="cls" width="11" height="11" viewBox="0 0 12 12"><path d="M1 1L11 11M11 1L1 11" stroke="#5f6364" stroke-width="1.800" /></svg>
      </div>
    </div>

    <nav class="tabs">
      <span class="file"><b v-fit="25">File</b></span>
      <span class="model"><b v-fit="48">Model</b></span>
      <b v-for="t in tabs" :key="t.t" v-fit="t.w" :style="{ marginLeft: t.ml + 'px' }">{{ t.t }}</b>
      <span class="grow"></span>
      <div class="tabtools">
        <svg class="m0" width="20" height="20" viewBox="0 0 20 20" v-html="icons.toparrow" />
        <svg class="m1" width="19" height="19" viewBox="0 0 20 20" v-html="icons.findw" />
        <svg class="m2" width="18" height="18" viewBox="0 0 20 20" v-html="icons.grad" />
        <i class="caret white"></i>
        <span class="help">?</span>
      </div>
    </nav>

    <section class="ribbon">
      <div v-for="g in groups" :key="g.label" class="group" :style="{ width: g.w + 'px' }">
        <div class="gbody">
          <div v-for="l in g.large" :key="l.icon" class="large" :style="{ width: l.w + 'px', marginLeft: l.ml + 'px' }">
            <svg width="40" height="40" viewBox="0 0 40 40" v-html="icons[l.icon]" />
            <div class="llabel"><span v-for="(t, k) in l.lines" :key="t" v-fit="l.ws[k]">{{ t }}</span></div>
            <i v-if="l.caret" class="caret"></i>
          </div>
          <div class="col" :style="{ marginLeft: g.gap + 'px' }">
            <div v-for="s in g.small" :key="s.label" class="item" :class="{ off: s.off }">
              <svg width="20" height="20" viewBox="0 0 20 20" v-html="icons[s.icon]" />
              <span v-fit="s.w">{{ s.label }}</span>
              <i v-if="s.caret" class="caret" :class="{ pale: s.off }" :style="{ marginLeft: s.caret + 'px' }"></i>
            </div>
          </div>
        </div>
        <div class="glabel"><span v-fit="g.lw">{{ g.label }}</span><i class="caret"></i></div>
      </div>
    </section>

    <main class="work">
      <aside class="side">
        <div class="stabs">
          <div class="stab on"><svg width="20" height="24" viewBox="0 -1 20 22" v-html="icons.mtree" /><span v-fit="74">Model Tree</span></div>
          <div class="stab browser"><svg width="23" height="23" viewBox="0 0 23 23" v-html="icons.folders" /><span class="fade" v-fit="55">Folder B</span></div>
          <div class="stab favs"><svg width="21" height="20" viewBox="0 0 21 20" v-html="icons.fav" /><span class="fade soft" v-fit="53">Favorite</span></div>
        </div>
        <div class="shead">
          <b v-fit="77">Model Tree</b>
          <svg class="h1" width="20" height="25" viewBox="0 0 20 25" v-html="icons.tools" /><i class="caret"></i>
          <svg class="h2" width="20" height="25" viewBox="0 0 20 25" v-html="icons.settings" /><i class="caret"></i>
          <svg class="h3" width="25" height="24" viewBox="0 0 25 24" v-html="icons.hidetree" />
        </div>
        <div class="sfilter">
          <svg width="20" height="20" viewBox="0 0 20 20" v-html="icons.filter" />
          <div class="box"><svg width="10" height="10" viewBox="0 0 10 10"><path d="M1 1L9 9M9 1L1 9" stroke="#a3a7a8" stroke-width="1.800" /></svg></div>
          <i class="caret"></i><i class="plus"></i>
        </div>
        <div class="sbody">
          <div class="rows">
            <div v-for="r in tree" :key="r.t" class="row" :class="{ dim: r.i === 'tsketch' }">
              <span class="tw"><i v-if="r.i === 'extrude'"></i></span>
              <svg width="20" height="20" viewBox="0 0 20 20" v-html="icons[r.i]" />
              <span v-fit="r.w">{{ r.t }}</span>
            </div>
            <div class="insert"></div>
          </div>
          <div class="scroll">
            <span class="up"><i class="caret flip"></i></span><span class="thumb"></span><span class="trough"></span><span class="dn"><i class="caret"></i></span>
          </div>
        </div>
      </aside>

      <section class="canvas">
        <div class="vtools">
          <span v-for="v in viewTools" :key="v.i" class="vt" :class="{ more: v.c }"><svg width="20" height="20" viewBox="0 0 20 20" v-html="icons[v.i]" /></span>
        </div>
        <svg class="spoon" width="400" height="500" viewBox="0 0 1200 1500">
          <defs>
            <linearGradient id="hg" gradientUnits="userSpaceOnUse" x1="130" y1="50" x2="750" y2="990">
              <stop offset="0" stop-color="#a1a1a1" /><stop offset=".45" stop-color="#a7a7a7" /><stop offset=".8" stop-color="#b0b0b0" /><stop offset=".9" stop-color="#a3a3a3" /><stop offset="1" stop-color="#828282" />
            </linearGradient>
            <linearGradient id="bowlg" gradientUnits="userSpaceOnUse" x1="720" y1="980" x2="1080" y2="1400">
              <stop offset="0" stop-color="#828282" /><stop offset=".5" stop-color="#9c9c9c" /><stop offset="1" stop-color="#b3b3b3" />
            </linearGradient>
            <radialGradient id="soft" gradientUnits="userSpaceOnUse" cx="0" cy="0" r="1" gradientTransform="translate(985 1275) rotate(57) scale(300 180)">
              <stop offset="0" stop-color="#ccc" stop-opacity=".8" /><stop offset=".5" stop-color="#b4b4b4" stop-opacity=".5" /><stop offset="1" stop-color="#aaa" stop-opacity="0" />
            </radialGradient>
            <radialGradient id="glow" gradientUnits="userSpaceOnUse" cx="0" cy="0" r="1" gradientTransform="translate(961 1245) rotate(60) scale(105 73)">
              <stop offset="0" stop-color="#fff" /><stop offset=".25" stop-color="#fff" /><stop offset=".6" stop-color="#ddd" stop-opacity=".65" /><stop offset="1" stop-color="#bbb" stop-opacity="0" />
            </radialGradient>
            <radialGradient id="inner" gradientUnits="userSpaceOnUse" cx="0" cy="0" r="1" gradientTransform="translate(620 800) rotate(58) scale(330 55)">
              <stop offset="0" stop-color="#cbcbcb" /><stop offset=".5" stop-color="#bcbcbc" stop-opacity=".7" /><stop offset="1" stop-color="#b0b0b0" stop-opacity="0" />
            </radialGradient>
          </defs>
          <path :d="'M63 115Q62 96 82 84L120 55Q140 42 165 46L182 61C270 165 370 285 440 390C540 535 640 695 735 870Q765 935 830 965C900 977 950 962 1010 1010C1085 1070 1125 1190 1138 1280V1360C1130 1430 1085 1471 1020 1472C940 1465 850 1420 780 1355C710 1290 696 1230 697 1160C698 1105 718 1085 719 1060V1020Q712 965 675 932' + handleLeft" fill="#757575" />
          <path :d="'M63 115Q62 96 82 84L120 55Q140 42 160 46C260 165 360 290 432 392C530 540 628 700 722 872Q755 938 812 965C900 985 950 968 990 1000C1070 1070 1112 1170 1129 1270V1360C1125 1420 1085 1457 1020 1460C940 1453 860 1410 790 1345C722 1280 702 1220 705 1160C706 1115 722 1085 723 1055V1020Q715 965 684 932' + handleLeftIn" fill="url(#hg)" />
          <path :d="bowl" fill="url(#bowlg)" />
          <path :d="bowl" fill="url(#soft)" />
          <ellipse cx="961" cy="1245" rx="110" ry="115" fill="url(#glow)" />
          <path d="M721 1020V1055C720 1085 702 1110 700 1160C698 1220 718 1275 785 1343" fill="none" stroke="#a8a8a8" stroke-width="6" />
          <path d="M850 972C900 975 940 970 980 990" fill="none" stroke="#a2a2a2" stroke-width="6" />
          <path :d="groove" fill="url(#inner)" />
          <ellipse cx="687" cy="880" rx="20" ry="10" fill="#c2c2c2" opacity=".45" transform="rotate(-30 687 880)" />
          <path :d="groove" fill="none" stroke="#f8f8f9" stroke-width="6.500" />
          <path d="M131 119L150 117 174 137 145 161Q133 148 131 119Z" fill="#fff" />
          <g transform="translate(211 248) rotate(54)">
            <text x="0 33 66 98 134 164 193 224 257" y="0" class="engrave">VK AZF2YA</text>
            <path d="M105 -9L111 -26 118 -26 124 -9ZM264 -9L270 -26 277 -26 283 -9Z" fill="#fff" />
          </g>
        </svg>
      </section>
    </main>

    <footer class="status">
      <span class="sb"><svg width="20" height="22" viewBox="0 -1 20 22" v-html="icons.mtree" /></span>
      <svg class="s1" width="20" height="20" viewBox="0 0 20 20" v-html="icons.web" />
      <svg class="s2" width="20" height="20" viewBox="0 0 20 20" v-html="icons.page" />
      <i class="vl"></i><i class="bullet"></i>
      <span class="msg" v-fit="177">Feature redefined successfully.</span>
      <span class="grow"></span>
      <div class="sright">
        <i class="vl"></i>
        <svg class="s3" width="20" height="20" viewBox="0 0 20 20" v-html="icons.stack" />
        <span class="count">3</span><span class="drop"><i class="caret"></i></span>
        <i class="vl a"></i><i class="vl b"></i>
        <div class="find"><span><svg width="20" height="20" viewBox="0 0 20 20" v-html="icons.bino" /></span><i class="caret"></i></div>
        <i class="vl"></i>
        <div class="select"><span v-fit="65">Geometry</span><em><i class="caret"></i></em></div>
      </div>
    </footer>
  </div>
</template>

<style>
body { margin: 0; overflow: hidden; }
</style>

<style scoped>
* { box-sizing: border-box; }
.screen { width: 1920px; height: 1080px; display: flex; flex-direction: column; overflow: hidden; background: #e8e9ed; font-family: "Noto Sans", "Open Sans", sans-serif; font-size: 15px; color: #3f4345; white-space: nowrap; }
.defs { position: absolute; }
svg, i { flex: none; display: block; overflow: visible; }
span, b { flex: none; }
.grow { flex: 1; }
.caret { width: 8px; height: 5px; background: #65696a; clip-path: polygon(0 0, 100% 0, 50% 100%); }
.caret.pale { background: #b6b8b9; }
.caret.white { background: #fff; }
.flip { transform: scaleY(-1); }

.taskbar { height: 38px; flex: none; display: flex; background: linear-gradient(90deg, #222024, #211f2b 30%, #292420 50%, #242228 80%, #231f26); color: #fff; }
.task { height: 38px; width: 20px; display: flex; justify-content: center; align-items: center; position: relative; }
.task.open::before { content: ""; position: absolute; top: 0; left: -8px; width: 35px; height: 3px; background: #b4b4b5; }
.task.active { width: 45px; margin-left: 13px; background: #343434; border-top: 3px solid #b4b4b5; height: 38px; padding-bottom: 3px; }
.tray { display: flex; align-items: center; width: 232px; }
.t2 { margin-left: 20px; }
.t3 { margin-left: 18px; margin-top: 1px; }
.t4 { margin-left: 15px; margin-top: 1px; }
.t5 { margin-left: 23px; }
.peek { width: 1px; height: 38px; background: #666; margin-left: 25px; }

.titlebar { height: 38px; flex: none; background: #dae0e0; display: flex; align-items: center; }
.brand { width: 105px; height: 36px; border-right: 1px solid #afb4b5; display: flex; align-items: center; padding-left: 14px; }
.logo { font: 22px "Liberation Sans", sans-serif; color: #696e70; -webkit-text-stroke: .5px #696e70; margin-left: 7px; margin-top: -2px; }
.reg { width: 3px; height: 3px; border-radius: 50%; background: #777; margin: -8px 0 0 0; }
.quick { display: flex; align-items: center; width: 342px; height: 36px; border-right: 1px solid #afb4b5; }
.q1 { margin-left: 11px; } .q2 { margin-left: 13px; } .q3 { margin-left: 15px; } .q4 { margin-left: 14px; }
.q5 { margin-left: 13px; } .q6 { margin-left: 15px; } .q7 { margin-left: 13px; } .q8 { margin-left: 13px; }
.q9 { margin-left: 14px; } .q10 { margin-left: 14px; } .q11 { margin-left: 17px; }
.custom { width: 11px; height: 9px; margin-left: 11px; border-top: 1.500px solid #55595a; position: relative; }
.custom::after { content: ""; position: absolute; left: 1px; top: 2px; width: 9px; height: 6px; background: #45494a; clip-path: polygon(0 0, 100% 0, 50% 100%); }
.title { margin-left: 108px; margin-top: -1px; font-size: 16px; }
.winbtns { display: flex; align-items: center; width: 104px; }
.min { width: 11px; height: 2px; background: #65696a; margin-top: 6px; }
.res { margin-left: 25px; } .cls { margin-left: 24px; }

.tabs { height: 39px; flex: none; background: #3f4647; display: flex; align-items: center; color: #fff; }
.tabs b { font-weight: 400; font-size: 16.500px; margin-top: -1px; }
.file { width: 79px; height: 39px; display: flex; align-items: center; justify-content: center; background: linear-gradient(170deg, #66d341, #53a936); }
.model { width: 109px; height: 39px; display: flex; align-items: center; justify-content: center; background: #f8f9fc; color: #3c8a26; }
.tabtools { display: flex; align-items: center; width: 149px; }
.m0 { margin-top: -5px; } .m1 { margin-left: 13px; } .m2 { margin-left: 15px; }
.tabtools .caret { margin-left: 15px; }
.help { margin-left: 12px; width: 24px; text-align: center; font-weight: 700; font-size: 18px; margin-top: -3px; }

.ribbon { height: 148px; flex: none; background: #f8f9fc; border-bottom: 1px solid #b0bdc2; display: flex; padding-top: 3px; }
.group { height: 142px; flex: none; border-right: 1px solid #b5babc; display: flex; flex-direction: column; }
.gbody { display: flex; height: 115px; }
.large { display: flex; flex-direction: column; align-items: center; padding-top: 6px; }
.llabel { margin-top: 15px; display: flex; flex-direction: column; align-items: center; line-height: 20px; }
.large .caret { margin-top: 7px; }
.col { display: flex; flex-direction: column; margin-top: -1px; }
.item { height: 36.500px; display: flex; align-items: center; gap: 5px; }
.item span { margin-top: -2px; }
.item .caret { margin-top: -2px; }
.off { color: #adafb1; }
.glabel { display: flex; align-items: center; justify-content: center; gap: 5px; height: 24px; }
.glabel .caret { margin-top: -1px; }

.work { display: flex; height: 766px; flex: none; }
.side { width: 342px; height: 766px; flex: none; background: linear-gradient(90deg, #f4fafa, #f8f9fc 60px); border-right: 3px solid #dadfe0; display: flex; flex-direction: column; }
.stabs { display: flex; height: 41px; width: 342px; background: #dae0e0; }
.stab { display: flex; align-items: center; height: 41px; flex: none; }
.stab span { margin-top: -2px; }
.stab.on { width: 128px; background: #f6fafb; padding-left: 13px; }
.on span { margin-left: 6px; }
.stab.browser { width: 106px; padding-left: 12px; }
.stab.favs { width: 100px; padding-left: 12px; }
.fade { margin-left: 5px; -webkit-mask-image: linear-gradient(90deg, #000 70%, rgba(0,0,0,.15)); mask-image: linear-gradient(90deg, #000 70%, rgba(0,0,0,.15)); }
.fade.soft { margin-left: 6px; -webkit-mask-image: linear-gradient(90deg, #000 75%, rgba(0,0,0,.5)); mask-image: linear-gradient(90deg, #000 75%, rgba(0,0,0,.5)); }
.shead { display: flex; align-items: center; height: 39px; padding-left: 35px; }
.shead b { margin-top: -2px; }
.h1 { margin-left: 62px; } .shead .caret { margin-left: 18px; } .h2 { margin-left: 17px; } .shead .h2 + .caret { margin-left: 16px; } .h3 { margin-left: 20px; }
.sfilter { display: flex; align-items: center; height: 38px; padding-left: 16px; }
.box { width: 231px; height: 38px; border: 1px solid #a7b5b9; background: #fff; margin-left: 6px; display: flex; align-items: center; justify-content: flex-end; padding-right: 8px; }
.sfilter .caret { margin-left: 9px; margin-top: -2px; }
.plus { width: 13px; height: 13px; margin-left: 19px; margin-top: -2px; background: linear-gradient(#9b9e9f, #9b9e9f) center/13px 4px no-repeat, linear-gradient(#9b9e9f, #9b9e9f) center/4px 13px no-repeat; }
.sbody { display: flex; flex: 1; padding-left: 10px; }
.rows { width: 300px; height: 640px; padding-top: 3px; font-size: 13px; }
.row { height: 28px; display: flex; align-items: center; }
.tw { width: 28px; display: flex; padding-left: 10px; }
.tw i { width: 9px; height: 10px; background: #848687; clip-path: polygon(0 0, 100% 50%, 0 100%); }
.row svg + span { margin-left: 6px; }
.dim { color: #b9bbbb; }
.insert { height: 3px; background: #61c843; margin-top: 9px; }
.scroll { width: 23px; height: 631px; margin-top: 10px; display: flex; flex-direction: column; }
.up, .dn { height: 23px; border: 1px solid #d0d2d4; background: #f7f7f8; display: flex; align-items: center; justify-content: center; }
.scroll .caret { background: #a6a8a9; }
.thumb { height: 55px; background: #dfe0e2; border-left: 1px solid #d0d2d4; border-right: 1px solid #d0d2d4; }
.trough { flex: 1; background: #f8f8f9; border: 1px solid #b7b9ba; }

.canvas { flex: 1; position: relative; background: #e8e9ed; }
.vtools { width: 750px; height: 42px; margin: 7px 0 0 414px; border: 1px solid #9ea2a5; background: #f8f9fc; display: flex; align-items: center; padding-left: 10px; }
.vt { width: 36px; height: 20px; position: relative; flex: none; }
.vt.more { width: 42px; }
.vt.more::after { content: ""; position: absolute; right: 11px; bottom: -4px; width: 4px; height: 4px; background: #606466; clip-path: polygon(100% 0, 100% 100%, 0 100%); }
.spoon { position: absolute; left: 588px; top: 117px; }
.engrave { font: 42px "Liberation Sans", sans-serif; fill: #f5f5f5; white-space: pre; }

.status { flex: none; height: 51px; background: #f6fafa; border-top: 1px solid #b3bcc0; display: flex; align-items: center; padding-left: 7px; padding-top: 10px; padding-bottom: 1px; position: relative; }
.sb { width: 30px; height: 30px; background: #dee0e2; border: 1px solid #a6a9ab; display: flex; align-items: center; padding-left: 8px; }
.sb svg { width: 18px; height: 20px; }
.s1 { margin-left: 9px; } .s2 { margin-left: 14px; }
.vl { width: 1px; height: 35px; background: #afb3b5; margin-top: -5px; }
.status > .vl { margin-left: 15px; height: 30px; margin-top: 0; }
.bullet { width: 6px; height: 6px; border-radius: 50%; background: #17638a; margin: -8px 0 0 9px; }
.msg { font-size: 13px; margin-left: 6px; margin-top: -5px; }
.sright { display: flex; align-items: center; width: 594px; font-size: 15px; margin-top: -3px; }
.s3 { margin-left: 9px; }
.count { width: 8px; letter-spacing: -.5px; margin-left: 7px; }
.drop { width: 36px; height: 19px; border: 1px solid #acafb0; display: flex; align-items: center; justify-content: center; background: #f8f8f8; }
.a { margin-left: 36px; }
.b { margin-left: 48px; }
.find { display: flex; align-items: center; height: 34px; width: 60px; border: 1px solid #bcc0c1; margin: 0 2px; background: #f9f9fa; }
.find span { width: 37px; height: 32px; display: flex; align-items: center; justify-content: center; border-right: 1px solid #c3c6c7; }
.find .caret { margin-left: 7px; }
.select { width: 222px; height: 32px; border: 1px solid #acafb0; background: #f8f8f8; display: flex; align-items: center; padding-left: 10px; margin-left: 119px; justify-content: space-between; }
.select em { width: 24px; height: 30px; border-left: 1px solid #acafb0; display: flex; align-items: center; justify-content: center; }
</style>
